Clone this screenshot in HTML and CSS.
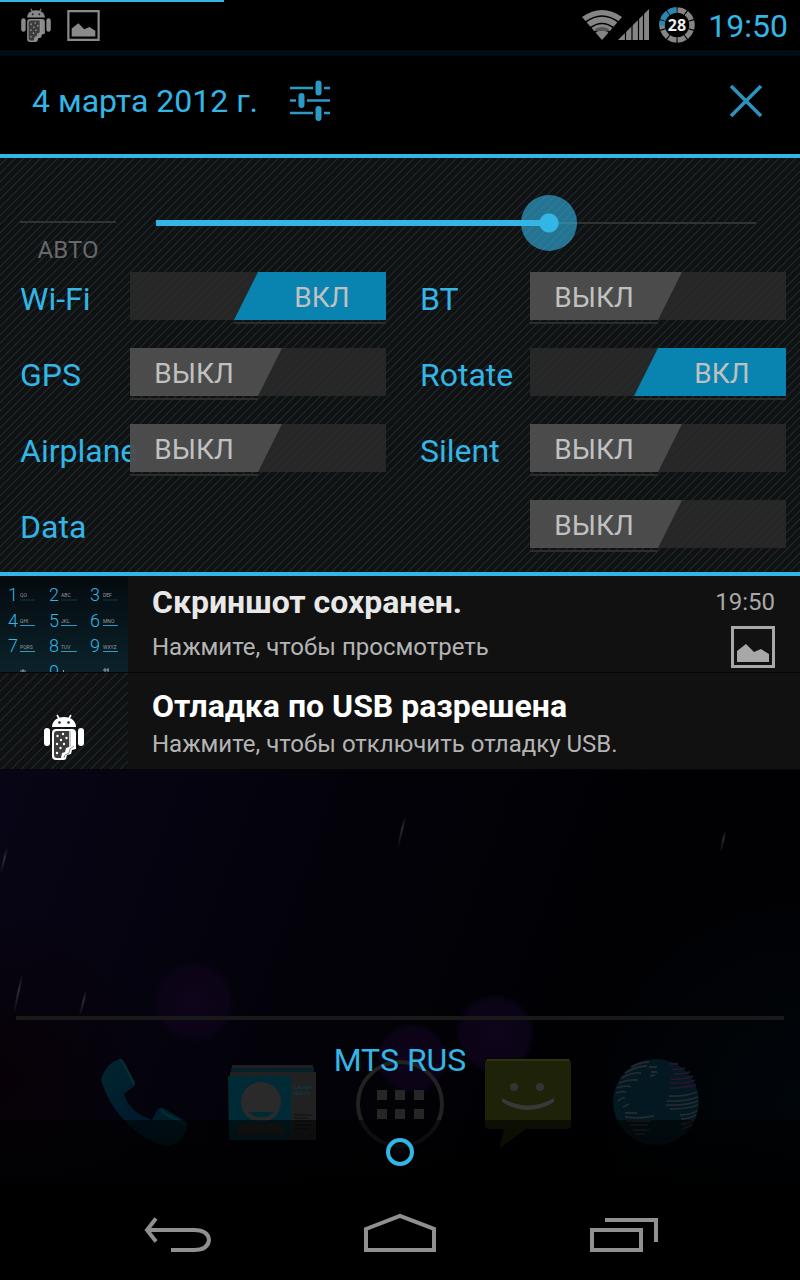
FILE: index.html
```html
<!DOCTYPE html>
<html lang="ru">
<head>
    <meta charset="UTF-8">
    <meta name="viewport" content="width=device-width, initial-scale=1">
    <title>Панель уведомлений</title>

    <link rel="stylesheet" href="styles.css">
</head>
<body>
    <!-- Shared icons -->
    <svg class="sprite" width="0" height="0" aria-hidden="true">
        <symbol id="debug" viewBox="0 0 40 46">
            <path d="M13 1l3 5M27 1l-3 5" stroke="currentColor" stroke-width="1.6"/>
            <path d="M8 13c0-6 5-10 12-10s12 4 12 10z" fill="currentColor"/>
            <circle cx="15.500" cy="8.500" r="1.300" fill="#222"/>
            <circle cx="24.500" cy="8.500" r="1.300" fill="#222"/>
            <rect x="0" y="14" width="6" height="18" rx="3" fill="currentColor"/>
            <rect x="34" y="14" width="6" height="18" rx="3" fill="currentColor"/>
            <path d="M8 19q0-4 4-4h16q4 0 4 4v16l-4 1-1 4-4 1-1 4q-1 1-3 1h-7q-4 0-4-4z" fill="currentColor"/>
            <path d="M10 20q0-3 3-3h12v16l-3 1-1 4-3 1-1 5h-4q-3 0-3-3z" fill="#3c3c3c"/>
            <path d="M26 17v16" stroke="#999" stroke-width="1"/>
            <path d="M30 32l-4 3-1 4-4 2-1 3" stroke="#999" stroke-width="1" fill="none"/>
            <g fill="currentColor">
                <circle cx="13.500" cy="22" r="1.200"/><circle cx="19" cy="20" r="1.200"/><circle cx="22.500" cy="24" r="1.200"/>
                <circle cx="17" cy="26" r="1.200"/><circle cx="13" cy="30" r="1.200"/><circle cx="20" cy="30" r="1.200"/>
                <circle cx="16.500" cy="34" r="1.200"/><circle cx="13" cy="39" r="1.200"/>
            </g>
        </symbol>
        <symbol id="picture" viewBox="0 0 44 42">
            <path d="M1.500 1.500h41v39h-41z" fill="none" stroke="currentColor" stroke-width="3"/>
            <path d="M6 25l9-7 8 8 7-3 8 5v8H6z" fill="currentColor"/>
        </symbol>
    </svg>

    <header class="status-bar">
        <div class="progress"></div>
        <svg class="status-debug" aria-label="USB"><use href="#debug"/></svg>
        <svg class="status-picture" aria-label="Скриншот"><use href="#picture"/></svg>
        <div class="status-right">
            <svg class="status-signal" viewBox="0 0 68 32">
                <path d="M20 31L0 8Q20-6 40 8z" fill="#858585"/>
                <g fill="none" stroke="#000" stroke-width="1.6">
                    <path d="M3 13.500q17-13 34 0M8 19q12-9 24 0M12 23.500q8-6 16 0"/>
                </g>
                <path d="M13 20q7-4 14 0l-2 3q-5-3-10 0z" fill="#555"/>
                <path d="M36 31L67 0v31z" fill="#858585"/>
                <path d="M43.500 20v12M50 14v18M56.500 6v26M61.500 3v29" stroke="#000" stroke-width="1.200"/>
            </svg>
            <svg class="battery" viewBox="0 0 36 36">
                <g fill="none" stroke-width="5.500" transform="rotate(-90 18 18)">
                    <circle cx="18" cy="18" r="15" stroke="#858585" pathLength="100" stroke-dasharray="8.800 1.200" stroke-dashoffset="-.6"/>
                    <circle cx="18" cy="18" r="15" stroke="#2489b5" pathLength="100" stroke-dasharray="0 74 5.400 1.200 8.800 1.200 8.800 .6"/>
                </g>
                <text x="18" y="24" text-anchor="middle">28</text>
            </svg>
            <time>19:50</time>
        </div>
    </header>

    <section class="date-bar">
        <h1>4 марта 2012 г.</h1>
        <button class="icon-button" aria-label="Настройки">
            <svg width="42" height="42" viewBox="0 0 42 42" fill="none" stroke="#2b9ac6">
                <path d="M1 8h23M35 8h6M1 20.500h6M18 20.500h23M1 33h23M35 33h6" stroke-width="2.600"/>
                <path d="M29.500 3.500v9M12.500 16v9M29.500 29v9" stroke-width="6" stroke-linecap="round"/>
            </svg>
        </button>
        <button class="icon-button close" aria-label="Закрыть">
            <svg width="34" height="34" viewBox="0 0 34 34" fill="none" stroke="#2b93bd" stroke-width="3.600">
                <path d="M2 2l30 30M32 2L2 32"/>
            </svg>
        </button>
    </section>

    <section class="panel">
        <div class="brightness">
            <button class="auto">АВТО</button>
            <input type="range" min="0" max="255" value="167" aria-label="Яркость" style="--level: 0.655">
        </div>

        <div class="toggles">
            <label class="toggle">
                <span class="name">Wi-Fi</span>
                <span class="switch"><input type="checkbox" checked><span class="off">ВЫКЛ</span><span class="on">ВКЛ</span></span>
            </label>
            <label class="toggle">
                <span class="name">BT</span>
                <span class="switch"><input type="checkbox"><span class="off">ВЫКЛ</span><span class="on">ВКЛ</span></span>
            </label>
            <label class="toggle">
                <span class="name">GPS</span>
                <span class="switch"><input type="checkbox"><span class="off">ВЫКЛ</span><span class="on">ВКЛ</span></span>
            </label>
            <label class="toggle">
                <span class="name">Rotate</span>
                <span class="switch"><input type="checkbox" checked><span class="off">ВЫКЛ</span><span class="on">ВКЛ</span></span>
            </label>
            <label class="toggle">
                <span class="name">Airplane</span>
                <span class="switch"><input type="checkbox"><span class="off">ВЫКЛ</span><span class="on">ВКЛ</span></span>
            </label>
            <label class="toggle">
                <span class="name">Silent</span>
                <span class="switch"><input type="checkbox"><span class="off">ВЫКЛ</span><span class="on">ВКЛ</span></span>
            </label>
            <label class="toggle wide">
                <span class="name">Data</span>
                <span class="switch"><input type="checkbox"><span class="off">ВЫКЛ</span><span class="on">ВКЛ</span></span>
            </label>
        </div>
    </section>

    <section class="notifications">
        <article class="notification">
            <svg class="keypad" viewBox="0 0 128 96">
                <g class="digits">
                    <text x="8" y="25">1</text><text x="49" y="25">2</text><text x="90" y="25">3</text>
                    <text x="8" y="51">4</text><text x="49" y="51">5</text><text x="90" y="51">6</text>
                    <text x="8" y="76">7</text><text x="49" y="76">8</text><text x="90" y="76">9</text>
                    <text x="49" y="102">0</text>
                </g>
                <g class="letters">
                    <text x="20" y="21">QO</text><text x="61" y="21">ABC</text><text x="103" y="21">DEF</text>
                    <text x="20" y="47">GHI</text><text x="61" y="47">JKL</text><text x="103" y="47">MNO</text>
                    <text x="20" y="73">PQRS</text><text x="61" y="73">TUV</text><text x="103" y="73">WXYZ</text>
                </g>
                <path d="M20 24h15M61 24h16M103 24h15" stroke="#0e3a4a"/>
                <path d="M20 49.500h15M61 49.500h16M103 49.500h15M20 75.500h15M61 75.500h16M103 75.500h15" stroke="#2b9ac6"/>
                <path d="M20 95h6M23 93v3M63.500 94v2M103 94h6M105 92v4M108 92v4" stroke="#999"/>
            </svg>
            <div class="text">
                <h2>Скриншот сохранен.</h2>
                <p>Нажмите, чтобы просмотреть</p>
            </div>
            <div class="info">
                <time>19:50</time>
                <svg width="44" height="42"><use href="#picture"/></svg>
            </div>
        </article>
        <article class="notification usb">
            <div class="icon">
                <svg width="40" height="46"><use href="#debug"/></svg>
            </div>
            <div class="text">
                <h2>Отладка по USB разрешена</h2>
                <p>Нажмите, чтобы отключить отладку USB.</p>
            </div>
        </article>
    </section>

    <main class="desktop">
        <svg class="wallpaper" viewBox="0 0 800 415" preserveAspectRatio="xMidYMax slice" aria-hidden="true">
            <defs>
                <radialGradient id="glow"><stop offset="0" stop-color="#10041a"/><stop offset=".85" stop-color="#0b0316"/><stop offset="1" stop-color="#0b0316" stop-opacity="0"/></radialGradient>
                <linearGradient id="rain" x2="0" y2="1"><stop offset="0" stop-color="#2c2b38" stop-opacity=".1"/><stop offset=".4" stop-color="#2c2b38"/><stop offset="1" stop-color="#2c2b38" stop-opacity=".1"/></linearGradient>
            </defs>
            <circle cx="194" cy="233" r="41" fill="url(#glow)"/>
            <circle cx="495" cy="265" r="40" fill="url(#glow)"/>
            <circle cx="412" cy="290" r="36" fill="url(#glow)"/>
            <g stroke="url(#rain)" stroke-width="2">
                <path d="M405 48l-7 30"/>
                <path d="M725 62l-4 20"/>
                <path d="M7 79l-6 24"/>
                <path d="M22 207l-8 36"/>
                <path d="M86 222l-6 24"/>
            </g>
        </svg>

        <nav class="dock">
            <a href="#phone" aria-label="Телефон">
                <svg width="96" height="96" viewBox="0 0 96 96">
                    <defs><linearGradient id="handset" x2="1" y2="1"><stop offset="0" stop-color="#00262f"/><stop offset=".5" stop-color="#001b2c"/><stop offset="1" stop-color="#00202b"/></linearGradient></defs>
                    <path d="M5 25Q10 8 24 4q3 0 4 3l11 20q1 3-2 5l-9 7q5 18 28 26l6-11q2-2 5-1l22 13q4 3 2 7Q86 89 71 91 48 87 28 65 12 48 5 25z" fill="url(#handset)"/>
                    <path d="M24 4l4 5 10 20M65 54l4 5 20 10" fill="none" stroke="#052f33" stroke-width="2"/>
                </svg>
            </a>
            <a href="#contacts" aria-label="Контакты">
                <svg width="96" height="96" viewBox="0 0 96 96">
                    <path d="M8 10h81v10H8z" fill="#1f1f1f"/>
                    <path d="M7 13h83v4H7z" fill="#04212a"/>
                    <path d="M6 17h86v68H6z" fill="#212121"/>
                    <path d="M4 21h63v64H5z" fill="#002b36"/>
                    <path d="M13 80q0-12 12-12h24q12 0 12 12z" fill="#242424"/>
                    <circle cx="37" cy="48" r="21" fill="#002b36"/>
                    <circle cx="37" cy="47" r="20" fill="#2a2a2a"/>
                    <path d="M24 57h26q-12 11-26 0z" fill="#002b36"/>
                    <text x="70" y="34">Lauren</text>
                    <text x="70" y="40">Ipsum</text>
                    <path d="M70 60h19M70 63h14M70 66h17M70 70h19M70 74h16" stroke="#101010"/>
                </svg>
            </a>
            <a href="#apps" aria-label="Приложения">
                <svg width="96" height="96" viewBox="0 0 96 96">
                    <circle cx="48" cy="49" r="42" fill="none" stroke="#222" stroke-width="4"/>
                    <path d="M25 35h10v10H25zM43 35h10v10H43zM62 35h10v10H62zM25 54h10v10H25zM43 54h10v10H43zM62 54h10v10H62z" fill="#262626"/>
                </svg>
            </a>
            <a href="#messages" aria-label="Сообщения">
                <svg width="96" height="96" viewBox="0 0 96 96">
                    <path d="M9 4h78q4 0 4 4v62q0 4-4 4H46L19 94l5-20H9q-4 0-4-4V8q0-4 4-4z" fill="#1d2208"/>
                    <path d="M7 5h82" stroke="#2b320c" stroke-width="2"/>
                    <circle cx="34" cy="32" r="4" fill="#333"/>
                    <circle cx="60" cy="32" r="4" fill="#333"/>
                    <path d="M22 43q26 15 52 0v4q-26 16-52 0z" fill="#383838"/>
                </svg>
            </a>
            <a href="#browser" aria-label="Браузер">
                <svg width="96" height="96" viewBox="0 0 96 96">
                    <circle cx="48" cy="47" r="43" fill="#031820"/>
                    <g fill="none" stroke="#232b30" stroke-width="1.800">
                        <path d="M23 12q9-5 18-5M17 18q12-7 22-7M13 23q12-6 20-5M11 28q10-4 19-3M9 33q8-3 14-1M8 38q6-2 10-1"/>
                        <path d="M10 46q4-4 7-3M15 52l6-3M17 58h12M17 62q15 2 29-1M19 66h24M22 70h18M25 75h16M27 79h10"/>
                        <path d="M61 41q15 1 28-4M59 46q18 1 31-4M58 50q20 1 32-4M62 54q17 0 28-4M72 60q10 0 17-4M73 64q8 0 15-4M73 69q7 0 13-4M74 74l10-4"/>
                        <path d="M41 12h8M43 17h6M42 21l5-1"/>
                    </g>
                    <path d="M62 9h8M64 14q8 1 13-1M66 19q10 0 16-2M63 24q14 1 22-3M62 28q15 1 25-3M61 33q6 1 27-3" fill="none" stroke="#26152c" stroke-width="1.800"/>
                </svg>
            </a>
        </nav>

        <div class="carrier">
            <p>MTS RUS</p>
            <span class="handle"></span>
        </div>
    </main>

    <nav class="nav-bar">
        <button aria-label="Назад">
            <svg width="72" height="44" viewBox="0 0 72 44" fill="none" stroke="#909090" stroke-width="4">
                <path d="M7 20h47q14 0 15 10-1 10-15 10H31"/>
                <path d="M16 8.500L7 20l9 11.500"/>
            </svg>
        </button>
        <button aria-label="Домой">
            <svg width="72" height="44" viewBox="0 0 72 44" fill="none" stroke="#909090" stroke-width="4">
                <path d="M2 19L36 6l34 13v21H2z"/>
            </svg>
        </button>
        <button aria-label="Недавние">
            <svg width="72" height="44" viewBox="0 0 72 44" fill="none" stroke="#909090" stroke-width="4">
                <path d="M4 20h49v20H4z"/>
                <path d="M17 10h51v22"/>
            </svg>
        </button>
    </nav>
</body>
</html>
```
FILE: styles.css
```css
* {
    box-sizing: border-box;
}

body {
    font-family: Roboto, "Noto Sans", sans-serif;
    background-color: #000;
    display: flex;
    flex-direction: column;
    min-height: 100vh;
    margin: 0;
    color: #33b5e5; /* Holo blue */
}

h1, h2, p {
    margin: 0;
    font-weight: normal;
}

button {
    background: none;
    border: none;
    padding: 0;
    font-family: inherit;
    color: inherit;
    cursor: pointer;
}

svg {
    display: block;
}

.sprite {
    position: absolute;
}

/* Status bar */
.status-bar {
    position: relative;
    display: flex;
    align-items: center;
    height: 56px;
    padding: 0 12px 0 21px;
    border-bottom: 6px solid #020c14;
    color: #8a8a8a;
}

.progress {
    position: absolute;
    top: 0;
    left: 0;
    width: 28%;
    height: 2px;
    background-color: #33b5e5;
}

.status-debug {
    width: 30px;
    height: 34px;
}

.status-picture {
    width: 33px;
    height: 31px;
    margin-left: 16px;
}

.status-right {
    display: flex;
    align-items: center;
    margin-left: auto;
}

.status-signal {
    width: 68px;
    height: 32px;
}

.battery {
    width: 36px;
    height: 36px;
    margin: 0 13px 0 9px;
}

.battery text {
    font: bold 16px "Open Sans", sans-serif;
    fill: #eee;
}

.status-right time {
    font-size: 32px;
    line-height: 40px;
    padding-top: 2px;
    color: #33b5e5;
}

/* Date row */
.date-bar {
    display: flex;
    align-items: center;
    height: 102px;
    padding: 0 37px 8px 32px;
    border-bottom: 4px solid #33b5e5;
}

.date-bar h1 {
    font-size: 32px;
    margin-right: 31px;
}

.close {
    margin-left: auto;
}

/* Quick settings */
.panel {
    padding: 37px 14px 24px 20px;
    border-bottom: 4px solid #33b5e5;
    background: repeating-linear-gradient(135deg, #111 0 4px, #172e37 5px, #111 6px);
}

.brightness {
    display: flex;
    align-items: flex-start;
    margin-bottom: 6px;
}

.auto {
    flex: none;
    width: 96px;
    margin-top: 26px;
    padding-top: 11px;
    border-top: 2px solid #333;
    font-size: 24px;
    line-height: 32px;
    color: #686868;
}

.brightness input {
    flex: 1;
    appearance: none;
    height: 56px;
    margin: 0 2px 0 12px;
    background:
        linear-gradient(#33b5e5, #33b5e5) 28px 50% / calc((100% - 56px) * var(--level)) 6px no-repeat,
        linear-gradient(#333, #333) 28px 50% / calc(100% - 56px) 2px no-repeat;
}

.brightness input::-webkit-slider-thumb {
    appearance: none;
    width: 56px;
    height: 56px;
    border-radius: 50%;
    background: radial-gradient(circle, #33b5e5 9px, rgba(51, 181, 229, 0.6) 10px);
}

.toggles {
    display: grid;
    grid-template-columns: 1fr 1fr;
    gap: 28px 34px;
}

.toggle {
    display: flex;
    height: 48px;
}

.name {
    flex: none;
    width: 110px;
    padding-top: 6px;
    font-size: 32px;
    line-height: 42px;
}

.switch {
    position: relative;
    flex: 1;
    font-size: 28px;
    line-height: 48px;
    color: #c0c0c0;
}

.switch input {
    appearance: none;
    position: absolute;
    inset: 0;
    margin: 0;
    background-color: rgba(42, 42, 42, 0.85);
}

.switch .on,
.switch .off {
    position: absolute;
    z-index: 1;
    top: 0;
    width: 50%;
    height: 48px;
    padding-top: 2px;
    text-align: center;
}

.switch .on {
    right: 0;
}

.switch input:checked ~ .off,
.switch input:not(:checked) ~ .on {
    display: none;
}

/* Slanted thumb */
.switch .on::before,
.switch .off::before {
    content: "";
    position: absolute;
    z-index: -1;
    inset: 0;
}

.switch .off::before {
    right: -24px;
    background-color: rgba(88, 88, 88, 0.75);
    clip-path: polygon(0 0, 100% 0, calc(100% - 24px) 100%, 0 100%);
}

.switch .on::before {
    left: -24px;
    background-color: #0983b0;
    clip-path: polygon(24px 0, 100% 0, 100% 100%, 0 100%);
}

.switch .on::after,
.switch .off::after {
    content: "";
    position: absolute;
    left: 0;
    right: 0;
    bottom: -4px;
    height: 2px;
    background-color: #2c2c2c;
}

.switch .on::after {
    left: -24px;
}

/* Label on the left, switch under the right column */
.wide {
    grid-column: 1 / 3;
    justify-content: space-between;
}

.wide .switch {
    flex: 0 0 calc(50% - 127px);
}

/* Notifications */
.notification {
    display: flex;
    height: 97px;
    background-color: #111;
    border-bottom: 1px solid #060606;
}

.keypad {
    flex: none;
    width: 128px;
    height: 96px;
    background: linear-gradient(#040a0e, #0b222b);
}

.digits {
    font-size: 18px;
    font-weight: 300;
    fill: #33b5e5;
}

.letters {
    font-size: 5px;
    fill: #999;
}

.icon {
    display: flex;
    flex: none;
    width: 128px;
    padding: 41px 44px 0;
    background: repeating-linear-gradient(135deg, #111 0 5px, #172e37 6px, #111 7px);
    color: #fff;
}

.text {
    flex: 1;
    padding: 7px 0 0 24px;
}

.text h2 {
    margin-bottom: 10px;
    font-size: 32px;
    font-weight: bold;
    line-height: 38px;
    color: #e8e8e8;
}

.text p {
    font-size: 24px;
    line-height: 32px;
    color: #b4b4b4;
}

.usb .text {
    padding-top: 14px;
}

.usb h2 {
    margin-bottom: 3px;
    color: #fff;
}

.info {
    display: flex;
    flex-direction: column;
    align-items: flex-end;
    gap: 8px;
    padding: 10px 25px 0 0;
    font-size: 24px;
    line-height: 32px;
    color: #a8a8a8;
}

/* Dimmed home screen */
.desktop {
    position: relative;
    display: flex;
    flex: 1;
    flex-direction: column;
    justify-content: flex-end;
    min-height: 320px;
    background:
        radial-gradient(circle at 100% 80%, #01060a, transparent 25%),
        radial-gradient(circle at 0 75%, #070106, transparent 20%),
        linear-gradient(110deg, #080516, #030209 40%, #010104 70%);
}

.desktop::after {
    content: "";
    position: absolute;
    left: 0;
    right: 0;
    bottom: 0;
    height: 64px;
    background: linear-gradient(rgba(0, 0, 0, 0.55), rgba(0, 0, 0, 0.8));
}

.wallpaper {
    position: absolute;
    inset: 0;
    width: 100%;
    height: 100%;
}

.dock {
    position: relative;
    display: flex;
    justify-content: center;
    gap: 32px;
    padding-bottom: 33px;
}

.dock text {
    font-size: 6px;
    fill: #04404f;
}

.carrier {
    position: absolute;
    z-index: 1;
    left: 16px;
    right: 16px;
    bottom: 18px;
    display: flex;
    flex-direction: column;
    align-items: center;
    gap: 58px;
    border-top: 4px solid #191919;
    padding-top: 20px;
}

.carrier p {
    font-size: 32px;
    line-height: 40px;
}

.handle {
    width: 28px;
    height: 28px;
    border: 4px solid #33b5e5;
    border-radius: 50%;
}

/* Navigation keys */
.nav-bar {
    display: flex;
    justify-content: center;
    height: 96px;
    background-color: #000;
}

.nav-bar button {
    display: flex;
    align-items: center;
    justify-content: center;
    width: 28%;
}
```
